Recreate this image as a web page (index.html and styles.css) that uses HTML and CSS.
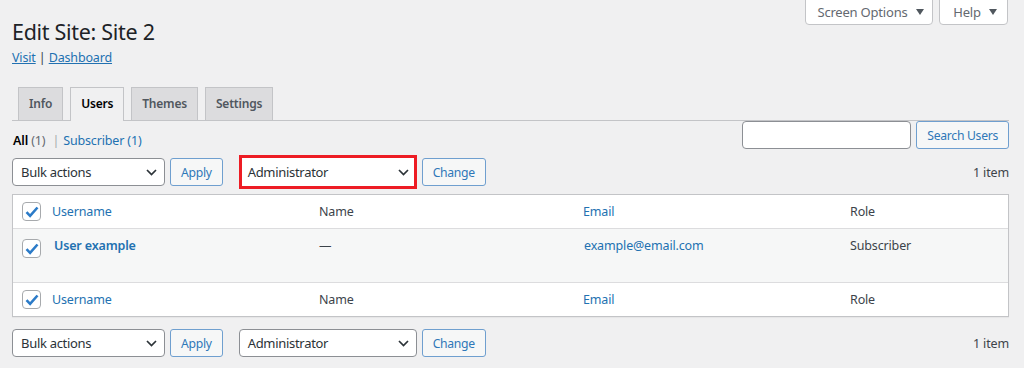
FILE: index.html
```html
<!DOCTYPE html>
<html lang="en">
<head>
    <meta charset="UTF-8">
    <title>Edit Site: Site 2</title>
    <link rel="stylesheet" href="styles.css">
</head>
<body>
    <div class="wrap">
        <div class="screen-meta-links">
            <button class="meta-btn meta-screen">Screen Options <svg class="caret" width="8" height="6" viewBox="0 0 8 6"><path d="M0 0h8L4 6z"/></svg></button>
            <button class="meta-btn meta-help">Help <svg class="caret" width="8" height="6" viewBox="0 0 8 6"><path d="M0 0h8L4 6z"/></svg></button>
        </div>
        <h1>Edit Site: Site 2</h1>
        <p class="edit-site-actions"><a href="#">Visit</a> | <a href="#">Dashboard</a></p>

        <nav class="nav-tab-wrapper">
            <a class="nav-tab" href="#">Info</a>
            <a class="nav-tab nav-tab-active" href="#">Users</a>
            <a class="nav-tab" href="#">Themes</a>
            <a class="nav-tab" href="#">Settings</a>
        </nav>

        <div class="list-top">
            <ul class="subsubsub">
                <li><b>All</b> <span class="count">(1)</span> <span class="sep">|</span></li>
                <li><a href="#">Subscriber <span class="count">(1)</span></a></li>
            </ul>
            <div class="search-box">
                <input type="search" class="search-input">
                <button class="button">Search Users</button>
            </div>
        </div>

        <div class="tablenav tablenav-top">
            <div class="select select-bulk"><span>Bulk actions</span><svg class="chev" width="11" height="7" viewBox="0 0 11 7"><path d="M1 1l4.5 4.5L10 1"/></svg></div>
            <button class="button">Apply</button>
            <div class="select select-role highlight"><span>Administrator</span><svg class="chev" width="11" height="7" viewBox="0 0 11 7"><path d="M1 1l4.5 4.5L10 1"/></svg></div>
            <button class="button">Change</button>
            <div class="num-items">1 item</div>
        </div>

        <table class="users">
            <colgroup>
                <col class="col-cb">
                <col class="col-username">
                <col class="col-name">
                <col class="col-email">
                <col class="col-role">
            </colgroup>
            <thead>
                <tr>
                    <td class="cb"><span class="check"><svg width="14" height="12" viewBox="0 0 14 12"><path d="M1.5 6.2l3.6 3.6L12.5 1.5"/></svg></span></td>
                    <th><a href="#">Username</a></th>
                    <th>Name</th>
                    <th><a href="#">Email</a></th>
                    <th>Role</th>
                </tr>
            </thead>
            <tbody>
                <tr>
                    <td class="cb"><span class="check"><svg width="14" height="12" viewBox="0 0 14 12"><path d="M1.5 6.2l3.6 3.6L12.5 1.5"/></svg></span></td>
                    <td class="username"><a href="#"><strong>User example</strong></a></td>
                    <td>&mdash;</td>
                    <td class="email"><a href="#">example@email.com</a></td>
                    <td>Subscriber</td>
                </tr>
            </tbody>
            <tfoot>
                <tr>
                    <td class="cb"><span class="check"><svg width="14" height="12" viewBox="0 0 14 12"><path d="M1.5 6.2l3.6 3.6L12.5 1.5"/></svg></span></td>
                    <th><a href="#">Username</a></th>
                    <th>Name</th>
                    <th><a href="#">Email</a></th>
                    <th>Role</th>
                </tr>
            </tfoot>
        </table>

        <div class="tablenav tablenav-bottom">
            <div class="select select-bulk"><span>Bulk actions</span><svg class="chev" width="11" height="7" viewBox="0 0 11 7"><path d="M1 1l4.5 4.5L10 1"/></svg></div>
            <button class="button">Apply</button>
            <div class="select select-role"><span>Administrator</span><svg class="chev" width="11" height="7" viewBox="0 0 11 7"><path d="M1 1l4.5 4.5L10 1"/></svg></div>
            <button class="button">Change</button>
            <div class="num-items">1 item</div>
        </div>
    </div>
</body>
</html>
```

FILE: styles.css
```css
* {
    box-sizing: border-box;
}
body {
    margin: 0;
    background-color: #f0f0f1;
    font-family: "Noto Sans", "Open Sans", sans-serif;
    font-size: 12.5px;
    letter-spacing: -0.15px;
    color: #3c434a;
}
a {
    color: #2271b1;
}
.wrap {
    display: flow-root;
    padding: 0 15px 0 12px;
}
.screen-meta-links {
    float: right;
    display: flex;
    gap: 6px;
    margin-right: 1px;
}
.meta-btn {
    height: 26px;
    margin-top: -1px;
    background-color: #fff;
    border: 1px solid #c3c4c7;
    border-radius: 0 0 4px 4px;
    color: #646970;
    font-family: inherit;
    font-size: 13px;
    letter-spacing: -0.2px;
    display: flex;
    align-items: center;
    justify-content: center;
    gap: 8px;
    padding: 0 0 0 3px;
}
.meta-screen {
    width: 128px;
}
.meta-help {
    width: 69px;
}
.caret {
    fill: #50575e;
}
h1 {
    margin: 17px 0 0;
    font-size: 21.5px;
    letter-spacing: -0.3px;
    font-weight: 400;
    line-height: 30px;
    color: #1d2327;
}
.edit-site-actions {
    margin: 1px 0 0;
    line-height: 20px;
}
.nav-tab-wrapper {
    margin-top: 19px;
    padding-left: 6px;
    border-bottom: 1px solid #c3c4c7;
    display: flex;
    gap: 7px;
    height: 34px;
}
.nav-tab {
    display: block;
    height: 33px;
    padding: 0 10px;
    line-height: 32px;
    border: 1px solid #c3c4c7;
    border-bottom: none;
    background-color: #dcdcde;
    color: #50575e;
    font-size: 12px;
    letter-spacing: -0.2px;
    font-weight: 600;
    text-decoration: none;
}
.nav-tab-active {
    background-color: #f0f0f1;
    color: #000;
    height: 34px;
}
.list-top {
    display: flex;
    justify-content: space-between;
    height: 28px;
}
.subsubsub {
    list-style: none;
    margin: 0;
    padding: 10px 0 0 1px;
    display: flex;
    gap: 4px;
    line-height: 20px;
    color: #646970;
}
.subsubsub b {
    color: #000;
    font-weight: 600;
}
.subsubsub a {
    text-decoration: none;
}
.subsubsub .sep {
    margin-left: 4px;
    color: #a7aaad;
}
.search-box {
    display: flex;
    gap: 5px;
}
.search-input {
    width: 169px;
    height: 28px;
    border: 1px solid #8c8f94;
    border-radius: 4px;
    background: #fff;
}
.button {
    height: 28px;
    padding: 0 10px;
    background-color: #f6f7f7;
    border: 1px solid #6f9fcf;
    border-radius: 3px;
    color: #2f78b8;
    font-family: inherit;
    font-size: 12.2px;
    letter-spacing: -0.3px;
}
.tablenav {
    display: flex;
    align-items: center;
    height: 28px;
}
.tablenav-top {
    margin-top: 9px;
}
.tablenav-bottom {
    margin-top: 12px;
}
.select {
    height: 28px;
    display: flex;
    align-items: center;
    justify-content: space-between;
    padding: 0 7px 0 8px;
    background-color: #fff;
    border: 1px solid #8c8f94;
    border-radius: 4px;
    color: #2c3338;
    font-size: 13px;
    letter-spacing: -0.3px;
}
.select-bulk {
    width: 153px;
    margin-right: 5px;
}
.select-role {
    width: 178px;
    margin: 0 5px 0 16px;
}
.highlight {
    height: 34px;
    border: 3px solid #ed1c24;
    border-radius: 0;
    padding-left: 6px;
    padding-right: 5px;
}
.chev {
    fill: none;
    stroke: #2c3338;
    stroke-width: 1.7;
}
.num-items {
    margin-left: auto;
    color: #3c434a;
}
.users {
    margin-top: 8px;
    width: 100%;
    table-layout: fixed;
    border-spacing: 0;
    background-color: #fff;
    border: 1px solid #c3c4c7;
    box-shadow: 0 1px 1px rgba(0, 0, 0, 0.04);
}
.col-cb {
    width: 29px;
}
.col-username {
    width: 267px;
}
.col-name {
    width: 264px;
}
.col-email {
    width: 267px;
}
.users th,
.users td {
    padding: 7px 10px;
    text-align: left;
    font-weight: 400;
    line-height: 19px;
    color: #3c434a;
}
.users th a {
    text-decoration: none;
}
.users thead th,
.users thead td {
    border-bottom: 1px solid #dcdcde;
    height: 33px;
}
.users tfoot th,
.users tfoot td {
    border-top: 1px solid #dcdcde;
    height: 34px;
}
.users tbody td {
    background-color: #f6f7f7;
    vertical-align: top;
    height: 53px;
    padding-top: 7px;
}
.users td.cb {
    padding: 0 0 0 9px;
    vertical-align: middle;
}
.users tbody td.cb {
    vertical-align: top;
    padding-top: 10px;
}
.users td.username {
    padding-left: 12px;
}
.users td.username a {
    text-decoration: none;
}
.users td.username strong {
    font-weight: 600;
}
.users td.email {
    padding-left: 11px;
}
.users td.email a {
    text-decoration: none;
}
.check {
    display: flex;
    align-items: center;
    justify-content: center;
    width: 19px;
    height: 19px;
    background-color: #fff;
    border: 1px solid #a7aaad;
    border-radius: 4px;
}
.check svg {
    fill: none;
    stroke: #2b7bc8;
    stroke-width: 2.6;
}
```
